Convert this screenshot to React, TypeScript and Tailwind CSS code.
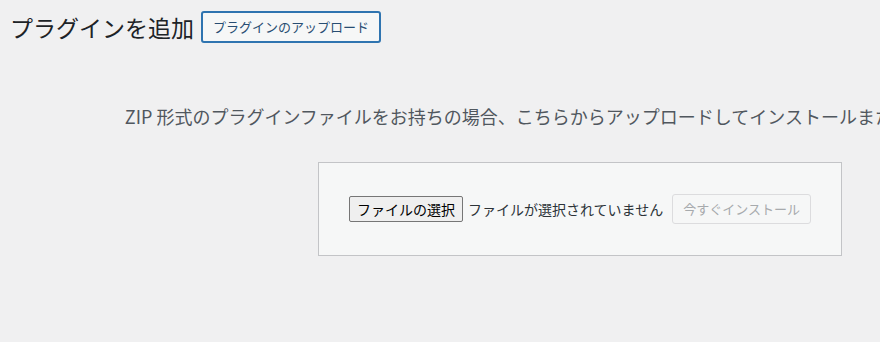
export default function App() {
  return (
    <div
      className="w-[880px] h-[342px] overflow-hidden bg-[#f0f0f1] text-[#1d2327]"
      style={{ fontFamily: '"Noto Sans CJK JP", "Noto Sans", sans-serif' }}
    >
      <div className="flex items-center pl-[10px] pt-[11px] gap-[7px]">
        <h1 className="text-[23px] leading-[32px] font-normal text-[#1d2327]">プラグインを追加</h1>
        <button className="h-[32px] px-[10px] text-[13px] leading-[28px] text-[#284d72] border-2 border-[#2f74b0] rounded-[3px] bg-[#f6f7f7]">
          プラグインのアップロード
        </button>
      </div>
      <div className="w-[1160px]">
        <p className="mt-[60px] text-center text-[18px] leading-[27px] text-[#50575e] whitespace-nowrap">
          ZIP 形式のプラグインファイルをお持ちの場合、こちらからアップロードしてインストールまたは更新できます。
        </p>
        <div className="mt-[32px] mx-auto w-[524px] h-[94px] bg-[#f6f7f7] border border-[#c3c4c7] px-[30px] flex items-center justify-between">
          <div className="flex items-center">
            <span className="h-[26px] px-[7px] flex items-center text-[14px] text-black bg-[#efefef] border border-[#767676] rounded-[2px]">
              ファイルの選択
            </span>
            <span className="ml-[5px] text-[14px] text-[#2c3338]">ファイルが選択されていません</span>
          </div>
          <button
            disabled
            className="h-[30px] px-[10px] text-[13px] text-[#a7aaad] border border-[#dcdcde] rounded-[3px] bg-[#f6f7f7]"
          >
            今すぐインストール
          </button>
        </div>
      </div>
    </div>
  );
}
